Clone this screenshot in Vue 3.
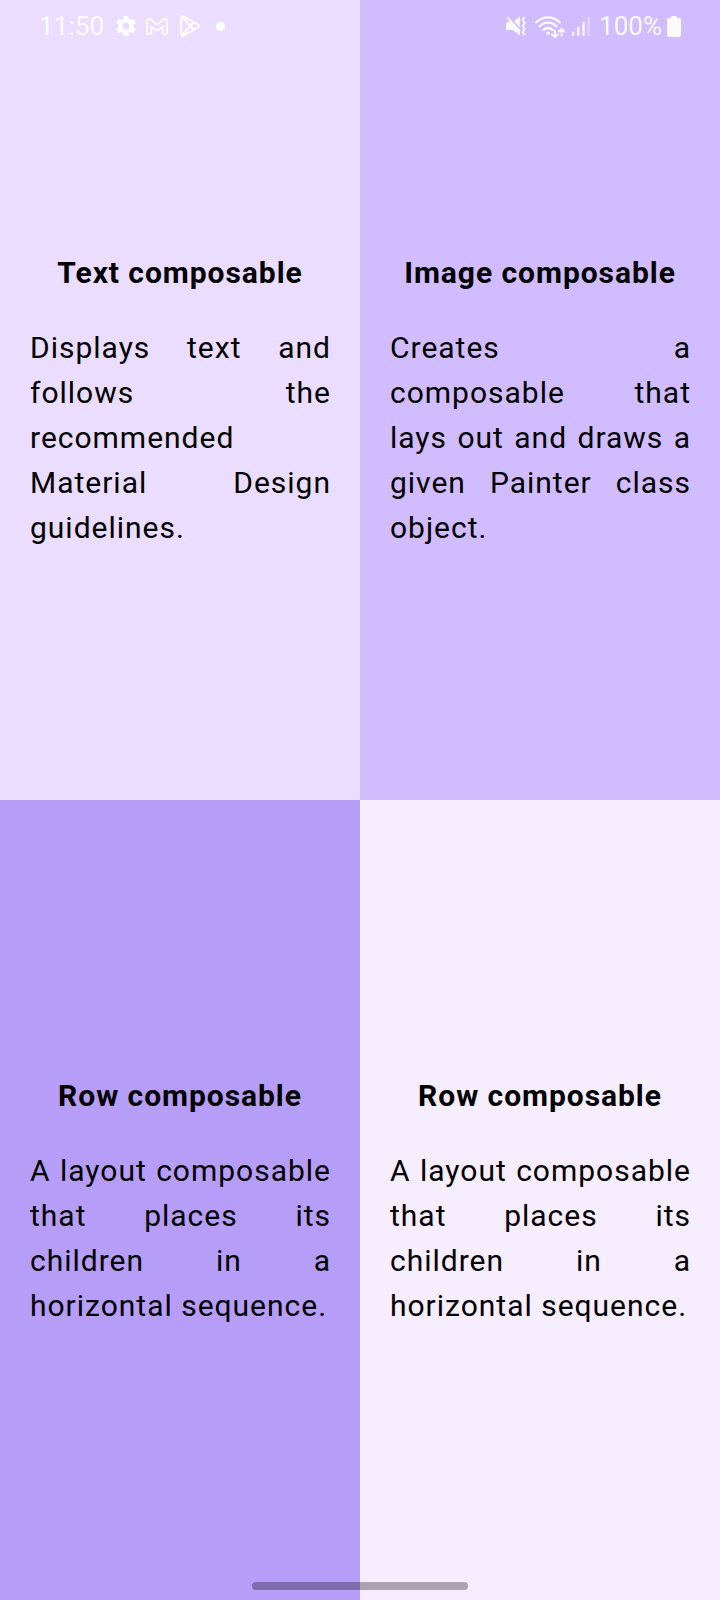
<script setup>
const cards = [
  { tone: 'lilac', title: 'Text composable', text: 'Displays text and follows the recommended Material Design guidelines.' },
  { tone: 'lavender', title: 'Image composable', text: 'Creates a composable that lays out and draws a given Painter class object.' },
  { tone: 'violet', title: 'Row composable', text: 'A layout composable that places its children in a horizontal sequence.' },
  { tone: 'pale', title: 'Row composable', text: 'A layout composable that places its children in a horizontal sequence.' },
]
</script>

<template>
  <main class="screen">
    <header class="status">
      <div class="left">
        <span class="time">11:50</span>
        <svg class="gear" width="20" height="20" viewBox="2 2 20 20">
          <path fill="currentColor" d="M19.43 12.98c.04-.32.07-.64.07-.98s-.03-.66-.07-.98l2.11-1.65c.19-.15.24-.42.12-.64l-2-3.46c-.12-.22-.39-.3-.61-.22l-2.49 1c-.52-.4-1.08-.73-1.69-.98l-.38-2.65C14.46 2.18 14.25 2 14 2h-4c-.25 0-.46.18-.49.42l-.38 2.65c-.61.25-1.17.59-1.69.98l-2.49-1c-.23-.09-.49 0-.61.22l-2 3.46c-.13.22-.07.49.12.64l2.11 1.65c-.04.32-.07.65-.07.98s.03.66.07.98l-2.11 1.65c-.19.15-.24.42-.12.64l2 3.46c.12.22.39.3.61.22l2.49-1c.52.4 1.08.73 1.69.98l.38 2.65c.03.24.24.42.49.42h4c.25 0 .46-.18.49-.42l.38-2.65c.61-.25 1.17-.59 1.69-.98l2.49 1c.23.09.49 0 .61-.22l2-3.46c.12-.22.07-.49-.12-.64zM12 15.5A3.5 3.5 0 1 1 12 8.500a3.500 3.500 0 0 1 0 7z" />
        </svg>
        <svg class="mail" width="22" height="17" viewBox="0 0 22 17">
          <path fill="none" stroke="currentColor" stroke-width="1.900" stroke-linejoin="round" d="M1 3.200V15q0 1 1 1h3.300V8.400l5.700 4.300 5.700-4.300V16H20q1 0 1-1V3.200C21 1.200 19 .3 17.300 1.600L11 6.400 4.700 1.600C3 .3 1 1.200 1 3.200Z" />
        </svg>
        <svg class="play" width="20" height="22" viewBox="0 0 20 22">
          <path fill="none" stroke="currentColor" stroke-width="2.100" stroke-linejoin="round" d="M1.200 2.700v16.600c0 1.300 1.100 1.900 2.200 1.300l14.700-8.300c1.200-.7 1.200-1.900 0-2.600L3.400 1.400C2.300.8 1.200 1.400 1.200 2.700ZM2 1.900l11.600 12.600M2 20.100 13.600 7.500" />
        </svg>
        <i class="dot"></i>
      </div>
      <div class="right">
        <svg class="mute" width="20" height="20" viewBox="0 0 20 20">
          <path fill="currentColor" d="M0 7.500q0-1.200 1.200-1.200h4L13.800 15.700v3.800L6.800 14H1.200Q0 14 0 12.800ZM8.200 5.300l5.600-4.700v10.900Z" />
          <path fill="none" stroke="currentColor" stroke-width="1.900" d="m1 1.200 12.800 13.800" />
          <path fill="none" stroke="currentColor" stroke-width="2" stroke-linejoin="round" d="m18.700 1-2.200 3 2.200 3-2.200 3 2.200 3-2.200 3 2.200 3" />
        </svg>
        <svg class="wifi" width="30" height="23" viewBox="0 0 30 23">
          <g fill="none" stroke="currentColor" stroke-width="2.300" stroke-linecap="round" stroke-linejoin="round">
            <path d="M1.200 6.500c6.700-6.900 16.900-6.900 23.600 0M4.700 10.300c4.700-4.800 11.900-4.800 16.600 0M8.300 14c2.700-2.700 6.700-2.700 9.400 0" />
            <path stroke-width="1.900" d="M19.800 14.500v6.700m-2.700-2.700 2.700 2.700 2.700-2.700M26.600 19.500v-6.700m-2.700 2.700 2.700-2.700 2.700 2.700" />
          </g>
          <circle cx="13" cy="17.200" r="1.700" fill="currentColor" />
        </svg>
        <svg class="signal" width="18" height="19" viewBox="0 0 18 19">
          <g fill="currentColor">
            <rect y="14.500" width="2.300" height="4.500" rx="1" />
            <rect x="5.200" y="10" width="2.300" height="9" rx="1" />
            <rect x="10.400" y="5" width="2.300" height="14" rx="1" />
            <rect x="15.600" width="2.300" height="19" rx="1" opacity=".4" />
          </g>
        </svg>
        <span class="percent">100%</span>
        <svg class="battery" width="14" height="21" viewBox="0 0 14 21">
          <path fill="currentColor" d="M4 2V1q0-1 1-1h4q1 0 1 1v1h2q2 0 2 2v15q0 2-2 2H2q-2 0-2-2V4q0-2 2-2Z" />
        </svg>
      </div>
    </header>
    <section v-for="(card, i) in cards" :key="i" class="card" :class="card.tone">
      <h2>{{ card.title }}</h2>
      <p>{{ card.text }}</p>
    </section>
    <div class="handle"></div>
  </main>
</template>

<style scoped>
.screen { position: relative; width: 720px; height: 1600px; display: grid; grid-template: 1fr 1fr / 1fr 1fr; font-family: Roboto, sans-serif; color: #000; overflow: hidden; }
.card { display: flex; flex-direction: column; justify-content: center; padding: 30px; }
h2 { margin: 0 0 30px; font-size: 30px; line-height: 45px; font-weight: 700; text-align: center; letter-spacing: .95px; }
p { margin: 0 -1px 0 0; font-size: 30px; line-height: 45px; letter-spacing: .99px; text-align: justify; }
.lilac { background: #eaddff; }
.lavender { background: #d0bcff; }
.violet { background: #b69df8; }
.pale { background: #f6edff; }
.status { position: absolute; inset: 0 0 auto; height: 52px; padding: 0 39px; display: flex; justify-content: space-between; color: rgba(255, 255, 255, .93); }
.left, .right { display: flex; align-items: center; }
.time, .percent { font-size: 26px; line-height: 52px; }
.time { letter-spacing: .1px; }
.gear { margin-left: 11.5px; }
.mail { margin-left: 10px; }
.play { margin-left: 12px; }
.dot { width: 9px; height: 9px; border-radius: 50%; background: currentColor; margin-left: 16.5px; }
.wifi { margin-left: 9px; margin-top: 2px; }
.signal { margin-left: 7px; }
.percent { margin-left: 9px; }
.battery { margin-left: 5px; }
.handle { position: absolute; left: 252px; bottom: 10px; width: 216px; height: 8px; border-radius: 4px; background: rgba(0, 0, 0, .31); }
</style>
